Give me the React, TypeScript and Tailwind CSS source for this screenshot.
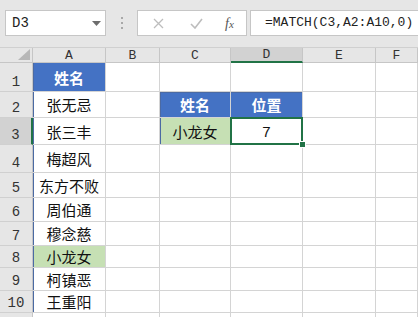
import { ChevronDown } from 'lucide-react'

const cols = ['A', 'B', 'C', 'D', 'E', 'F']

const rowHeights = [
  'h-[29px]',
  'h-[26px]',
  'h-[27px]',
  'h-[28px]',
  'h-[25px]',
  'h-[24px]',
  'h-[24px]',
  'h-[22px]',
  'h-[23px]',
  'h-[22px]',
  'h-[22px]',
]

const names = ['姓名', '张无忌', '张三丰', '梅超风', '东方不败', '周伯通', '穆念慈', '小龙女', '柯镇恶', '王重阳']

const cjk = "font-['Noto_Sans_CJK_SC',sans-serif]"
const hdrFont = "font-['Liberation_Mono',monospace]"

function ColumnHeaders() {
  return (
    <div className="flex h-[16px] bg-[#e6e6e6] border-t border-[#d0d0d0]">
      <div className="w-[33px] shrink-0 relative border-r border-b border-[#c6c6c6]">
        <svg className="absolute right-[2px] bottom-[2px]" width="12" height="11" viewBox="0 0 12 11">
          <polygon points="12,0 12,11 0,11" fill="#b7b7b7" />
        </svg>
      </div>
      {cols.map((c, i) => {
        const widths = ['w-[73px]', 'w-[54px]', 'w-[71px]', 'w-[72px]', 'w-[73px]', 'flex-1']
        const sel = c === 'D'
        return (
          <div
            key={c}
            className={`${widths[i]} shrink-0 flex items-center justify-center text-[13px] leading-none text-[#333] ${hdrFont} border-r border-[#c6c6c6] ${
              sel ? 'bg-[#d2d2d2] border-b-2 border-b-[#217346]' : 'border-b border-b-[#c6c6c6]'
            }`}
          >
            {c}
          </div>
        )
      })}
    </div>
  )
}

function Cell({ w, className = '', children }: { w: string; className?: string; children?: React.ReactNode }) {
  return (
    <div
      className={`${w} shrink-0 flex items-center justify-center border-r border-b border-[#d4d4d4] text-[15px] leading-none ${cjk} ${className}`}
    >
      {children}
    </div>
  )
}

function Row({ idx }: { idx: number }) {
  const r = idx + 1
  const name = names[idx]
  const tbl = 'border-[#4b6aa3] shadow-[inset_1px_0_0_#4b6aa3]'
  let aCls = ''
  if (name) {
    aCls = tbl + ' text-[#111]'
    if (r === 1) aCls = tbl + ' bg-[#4472c4] text-white font-bold'
    if (r === 8) aCls = tbl + ' bg-[#c6e0b4] text-[#111]'
  }
  return (
    <div className={`flex ${rowHeights[idx]}`}>
      <div
        className={`w-[33px] shrink-0 flex items-end justify-center pb-[2px] text-[14px] leading-none text-[#333] ${hdrFont} border-b border-[#d0d0d0] ${
          r === 3 ? 'bg-[#d2d2d2] border-r-2 border-r-[#217346]' : 'bg-[#e6e6e6] border-r border-r-[#c6c6c6]'
        }`}
      >
        {r <= 10 ? r : ''}
      </div>
      <Cell w="w-[73px]" className={aCls}>{name}</Cell>
      <Cell w="w-[54px]" />
      {r === 2 ? (
        <Cell w="w-[71px]" className="bg-[#4472c4] text-white font-bold border-[#4b6aa3] shadow-[inset_1px_1px_0_#4b6aa3]">
          姓名
        </Cell>
      ) : r === 3 ? (
        <Cell w="w-[71px]" className="bg-[#c6e0b4] text-[#111] border-[#4b6aa3] shadow-[inset_1px_0_0_#4b6aa3]">
          小龙女
        </Cell>
      ) : (
        <Cell w="w-[71px]" />
      )}
      {r === 2 ? (
        <Cell w="w-[72px]" className="bg-[#4472c4] text-white font-bold border-[#4b6aa3] shadow-[inset_0_1px_0_#4b6aa3]">
          位置
        </Cell>
      ) : r === 3 ? (
        <div className="w-[72px] shrink-0 relative flex items-center justify-center border-r border-b border-[#4b6aa3] bg-white text-[15px] leading-none text-[#111] font-['Liberation_Sans',sans-serif]">
          7
          <div className="absolute -left-px -top-px -right-px -bottom-px border-2 border-[#217346]" />
          <div className="absolute -right-[4px] -bottom-[4px] w-[7px] h-[7px] bg-[#217346] border border-white" />
        </div>
      ) : (
        <Cell w="w-[72px]" />
      )}
      <Cell w="w-[73px]" />
      <Cell w="flex-1" />
    </div>
  )
}

function FormulaBar() {
  return (
    <div className="flex items-start h-[47px] pt-[10px] pl-[5px] bg-[#e6e6e6]">
      <div className="w-[101px] h-[26px] bg-white border border-[#c6c6c6] flex items-center justify-between pl-[6px] pr-[4px]">
        <span className={`text-[14px] text-[#222] ${hdrFont}`}>D3</span>
        <svg width="9" height="5" viewBox="0 0 9 5">
          <polygon points="0,0 9,0 4.5,5" fill="#6d6d6d" />
        </svg>
      </div>
      <div className="w-[31px] h-[26px] flex flex-col items-center justify-center gap-[3px]">
        <div className="w-[2px] h-[2px] bg-[#a8a8a8]" />
        <div className="w-[2px] h-[2px] bg-[#a8a8a8]" />
        <div className="w-[2px] h-[2px] bg-[#a8a8a8]" />
      </div>
      <div className="w-[110px] h-[26px] bg-white border border-[#c6c6c6] flex items-center">
        <svg className="ml-[15px]" width="11" height="11" viewBox="0 0 11 11">
          <path d="M1 1 L10 10 M10 1 L1 10" stroke="#bdbdbd" strokeWidth="1.3" />
        </svg>
        <svg className="ml-[26px]" width="13" height="11" viewBox="0 0 13 11">
          <path d="M1 6 L5 10 L12 1" stroke="#bdbdbd" strokeWidth="1.6" fill="none" />
        </svg>
        <span className="ml-[22px] text-[14px] italic text-[#555] font-['Liberation_Serif',serif]">
          f<span className="text-[11px]">x</span>
        </span>
      </div>
      <div className="flex-1 ml-[3px] h-[26px] bg-white border border-r-0 border-[#c6c6c6] flex items-center pl-[14px]">
        <span className={`text-[13px] text-[#222] whitespace-nowrap ${hdrFont}`}>=MATCH(C3,A2:A10,0)</span>
      </div>
    </div>
  )
}

export default function App() {
  return (
    <div className="w-[418px] h-[317px] overflow-hidden bg-white">
      <FormulaBar />
      <ColumnHeaders />
      {rowHeights.map((_, i) => (
        <Row key={i} idx={i} />
      ))}
    </div>
  )
}
